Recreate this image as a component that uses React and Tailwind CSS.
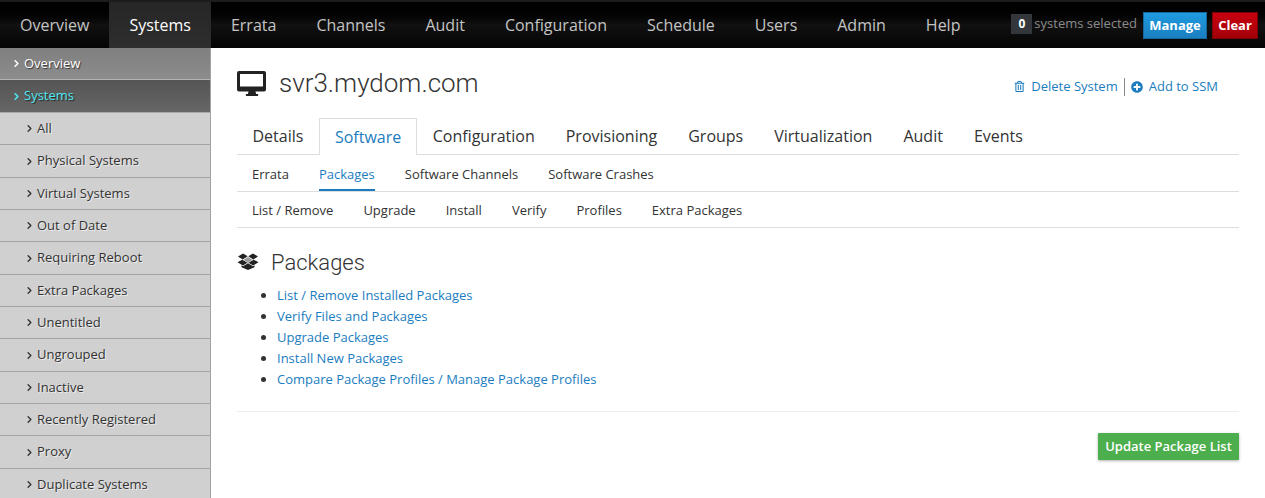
import { ChevronRight } from "lucide-react";
import { FaRegTrashAlt, FaPlusCircle } from "react-icons/fa";

const topNav = ["Overview", "Systems", "Errata", "Channels", "Audit", "Configuration", "Schedule", "Users", "Admin", "Help"];

const sideNav = [
  "All",
  "Physical Systems",
  "Virtual Systems",
  "Out of Date",
  "Requiring Reboot",
  "Extra Packages",
  "Unentitled",
  "Ungrouped",
  "Inactive",
  "Recently Registered",
  "Proxy",
  "Duplicate Systems",
];

const tabs = ["Details", "Software", "Configuration", "Provisioning", "Groups", "Virtualization", "Audit", "Events"];
const subTabs = ["Errata", "Packages", "Software Channels", "Software Crashes"];
const thirdTabs = ["List / Remove", "Upgrade", "Install", "Verify", "Profiles", "Extra Packages"];

const links = [
  "List / Remove Installed Packages",
  "Verify Files and Packages",
  "Upgrade Packages",
  "Install New Packages",
  "Compare Package Profiles / Manage Package Profiles",
];

function MonitorIcon() {
  return (
    <svg width="29" height="25" viewBox="0 0 29 25" className="shrink-0 text-[#222222]">
      <path
        fill="currentColor"
        fillRule="evenodd"
        d="M2 0h25a2 2 0 0 1 2 2v16.5a2 2 0 0 1-2 2h-8.5l.6 2.5h2v2H8.900v-2h2l.6-2.500H2a2 2 0 0 1-2-2V2a2 2 0 0 1 2-2zM3 3v12.500h23V3z"
      />
    </svg>
  );
}

function BoxIcon() {
  return (
    <svg width="22" height="17" viewBox="0 0 22 17" className="shrink-0 -mt-[2px] text-[#222222]">
      <g fill="currentColor">
        <path d="M1 3.500 6 .5l4.700 2.700-5 3.200z" />
        <path d="M21 3.500 16 .5l-4.700 2.700 5 3.200z" />
        <path d="M.5 9.300l4.800-2.600 5.200 3-4.600 2.800z" />
        <path d="M21.500 9.300l-4.800-2.600-5.200 3 4.600 2.800z" />
        <path d="M6.500 7l4.500-3 4.500 3-4.500 2.600z" opacity="0.45" />
        <path d="M4.500 12.300l1.500.9 5-3 5 3 1.500-.9v1.900L11 17l-6.500-2.800z" />
      </g>
    </svg>
  );
}

function Header() {
  return (
    <header className="h-12 flex bg-gradient-to-b from-[#000000] via-[#111111] to-[#050505] border-t-2 border-[#1c1c1c]">
      <nav className="flex">
        {topNav.map((item) => (
          <a
            key={item}
            className={
              item === "Systems"
                ? "px-5 pt-[11px] text-base text-white bg-gradient-to-b from-[#262626] to-[#2e2e2e]"
                : "px-5 pt-[11px] text-base text-[#c4c4c4]"
            }
          >
            {item}
          </a>
        ))}
      </nav>
      <div className="ml-auto flex items-start pt-[10px] pr-[7px]">
        <span className="w-[21px] h-[20px] mt-[2px] bg-[#33363b] text-white text-xs font-bold text-center leading-[20px]">0</span>
        <span className="ml-[2px] mt-px text-[13px] leading-[20px] text-[#8b8b8b]">systems selected</span>
        <button className="ml-[6px] h-[27px] w-[64px] bg-gradient-to-b from-[#1f9ae0] to-[#1a7fc0] border border-[#14689e] text-white text-[13px] font-bold">Manage</button>
        <button className="ml-[5px] h-[27px] w-[46px] bg-gradient-to-b from-[#c80010] to-[#a30008] border border-[#7e0006] text-white text-[13px] font-bold">Clear</button>
      </div>
    </header>
  );
}

function Sidebar() {
  return (
    <aside className="w-[211px] shrink-0 border-r border-[#a3a3a3] bg-[#d0d0d0] text-[13px] overflow-hidden">
      <div className="h-[32px] flex items-center pl-[11px] bg-gradient-to-b from-[#7f7f7f] to-[#8c8c8c] border-b border-[#b4b4b4] text-white [text-shadow:1px_1px_1px_rgba(0,0,0,0.6)]">
        <ChevronRight size={11} strokeWidth={3.5} className="mr-[2px]" />
        Overview
      </div>
      <div className="h-[33px] flex items-center pl-[11px] bg-gradient-to-b from-[#555555] to-[#666666] border-b border-[#a8a8a8] text-[#4fe9f2] [text-shadow:1px_1px_1px_rgba(0,0,0,0.6)]">
        <ChevronRight size={11} strokeWidth={3.5} className="mr-[2px]" />
        Systems
      </div>
      {sideNav.map((item) => (
        <div key={item} className="h-[32.35px] flex items-center pl-[24px] border-b border-[#a3a3a3] text-[#333333] [text-shadow:1px_1px_0_rgba(255,255,255,0.6)]">
          <ChevronRight size={11} strokeWidth={3} className="mr-[2px]" />
          {item}
        </div>
      ))}
    </aside>
  );
}

function Content() {
  return (
    <main className="flex-1 min-w-0 pl-[26px] pr-[26px] bg-white">
      <div className="flex items-center h-[70px]">
        <MonitorIcon />
        <h1 className="ml-[13px] text-[26px] text-[#333333] font-['Roboto'] font-light">svr3.mydom.com</h1>
        <div className="ml-auto mr-[21px] mt-[7px] flex items-center text-[13px] text-[#1b7dc0]">
          <FaRegTrashAlt size={11} className="mr-[6px]" />
          Delete System
          <span className="mx-[6px] h-[18px] w-px bg-[#8a8a8a]" />
          <FaPlusCircle size={12} className="mr-[6px]" />
          Add to SSM
        </div>
      </div>

      <div className="flex h-[37px] border-b border-[#dddddd]">
        {tabs.map((tab) => (
          <a
            key={tab}
            className={
              tab === "Software"
                ? "h-[37px] px-[15px] pt-[6px] text-base text-[#1b7dc0] bg-white border border-b-0 border-[#dddddd]"
                : "h-[36px] px-[15.5px] pt-[6px] text-base text-[#333333]"
            }
          >
            {tab}
          </a>
        ))}
      </div>

      <div className="flex h-[37px] border-b border-[#dddddd] pl-[15px] gap-[30px] text-[13px] text-[#333333]">
        {subTabs.map((tab) => (
          <a key={tab} className={tab === "Packages" ? "pt-[10px] text-[#1b7dc0] border-b-2 border-[#1b7dc0]" : "pt-[10px]"}>
            {tab}
          </a>
        ))}
      </div>

      <div className="flex h-[36px] border-b border-[#dddddd] pl-[15px] gap-[30px] text-[13px] text-[#333333]">
        {thirdTabs.map((tab) => (
          <a key={tab} className="pt-[9px]">
            {tab}
          </a>
        ))}
      </div>

      <div className="flex items-center mt-[19px] h-[30px]">
        <BoxIcon />
        <h2 className="ml-[12px] text-[22px] text-[#333333] font-['Roboto'] font-light">Packages</h2>
      </div>

      <ul className="mt-[8px] pl-[40px] list-disc text-[13px] leading-[21px] text-[#1b7dc0] marker:text-[#333333]">
        {links.map((link) => (
          <li key={link}>{link}</li>
        ))}
      </ul>

      <div className="mt-[21px] border-t border-[#eeeeee]" />

      <div className="flex justify-end mt-[21px]">
        <button className="h-[27px] w-[141px] bg-[#4cae4c] text-white text-[13px] font-semibold rounded-[1px] shadow-[0_1px_3px_rgba(0,0,0,0.3)]">
          Update Package List
        </button>
      </div>
    </main>
  );
}

export default function App() {
  return (
    <div className="h-[498px] overflow-hidden bg-white font-['Open_Sans',sans-serif]">
      <Header />
      <div className="flex h-[450px] overflow-hidden">
        <Sidebar />
        <Content />
      </div>
    </div>
  );
}
